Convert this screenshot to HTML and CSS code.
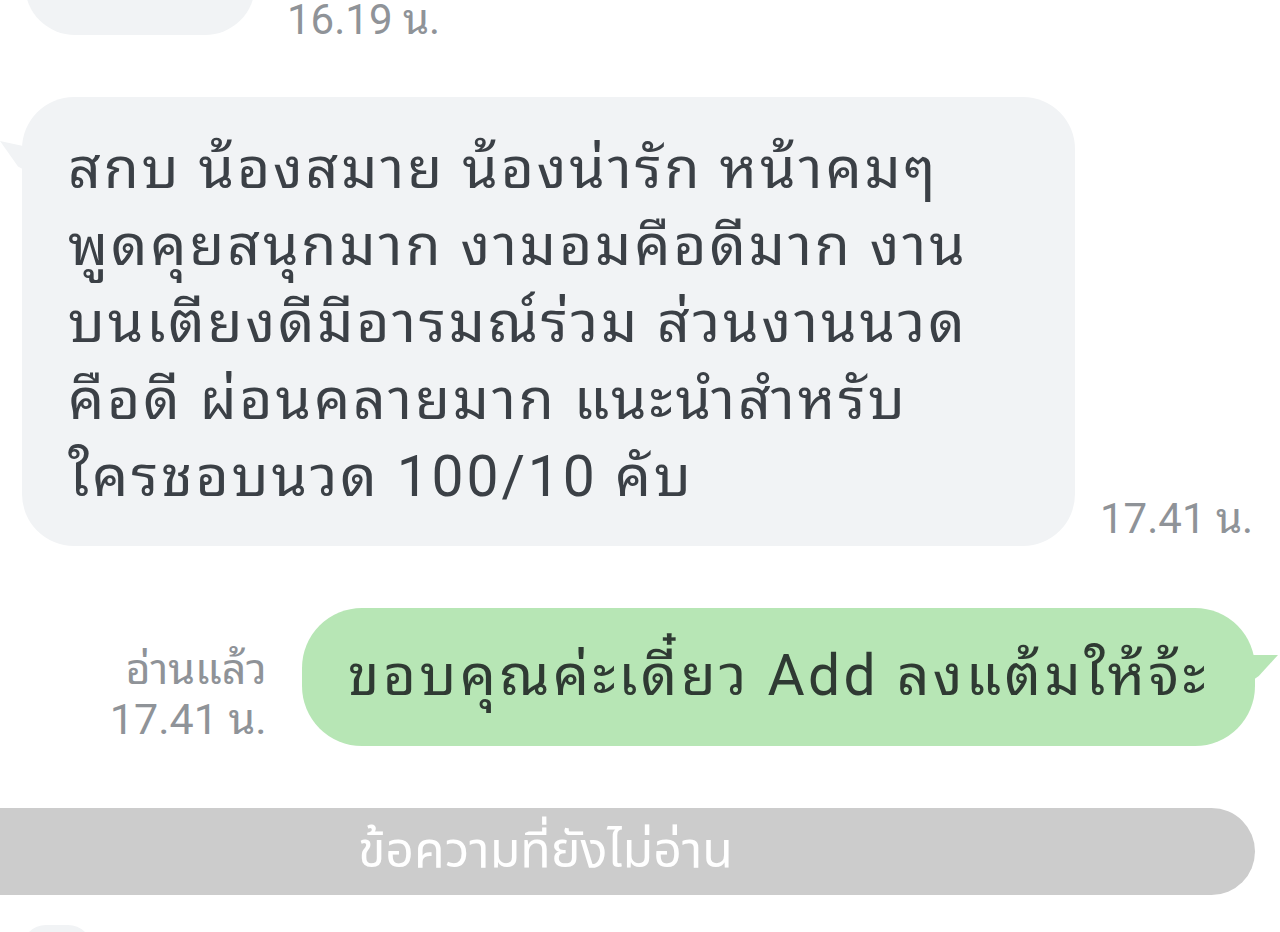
FILE: index.html
```html
<!doctype html>
<html lang="th">

<head>
  <meta charset="utf-8">
  <meta name="viewport" content="width=device-width, initial-scale=1">
  <link rel="stylesheet" href="styles.css">
  <title>แชท</title>
</head>

<body>
  <div class="chat">
    <div class="row row-in row-prev">
      <div class="bubble bubble-in bubble-prev"></div>
      <div class="meta meta-prev">16.19 น.</div>
    </div>

    <div class="row row-in">
      <div class="bubble bubble-in tail-in">
        สกบ น้องสมาย น้องน่ารัก หน้าคมๆ<br>
        พูดคุยสนุกมาก งามอมคือดีมาก งาน<br>
        บนเตียงดีมีอารมณ์ร่วม ส่วนงานนวด<br>
        คือดี ผ่อนคลายมาก แนะนำสำหรับ<br>
        ใครชอบนวด 100/10 คับ
      </div>
      <div class="meta">17.41 น.</div>
    </div>

    <div class="row row-out">
      <div class="meta meta-out">
        <div>อ่านแล้ว</div>
        <div>17.41 น.</div>
      </div>
      <div class="bubble bubble-out tail-out">ขอบคุณค่ะเดี๋ยว Add ลงแต้มให้จ้ะ</div>
    </div>

    <div class="unread">
      <span>ข้อความที่ยังไม่อ่าน</span>
    </div>

    <div class="row row-in">
      <div class="bubble bubble-in bubble-next"></div>
    </div>
  </div>
</body>

</html>
```

FILE: styles.css
```css
body {
  font-family: Roboto, "Noto Sans Thai Looped", "Noto Sans Thai", Waree, Loma, Garuda, "Noto Sans", sans-serif;
  margin: 0;
  background-color: #fff;
  color: #3b4046;
  overflow: hidden;
  height: 932px;
}

.chat {
  display: flex;
  flex-direction: column;
}

.row {
  display: flex;
  align-items: flex-end;
}

.row-in {
  padding-left: 22px;
}

.row-out {
  justify-content: flex-end;
  padding-right: 25px;
  margin-top: 62px;
}

.row-prev {
  margin-top: -65px;
  padding-left: 25px;
}

.bubble {
  position: relative;
  font-size: 57px;
  letter-spacing: 2.9px;
  line-height: 77px;
}

.bubble-in {
  background-color: #f1f3f5;
  border-radius: 52px;
  width: 1053px;
  box-sizing: border-box;
  padding: 33px 20px 31px 46px;
}

.bubble-prev {
  width: 230px;
  height: 100px;
  padding: 0;
  border-radius: 50px;
}

.bubble-next {
  width: 70px;
  height: 60px;
  padding: 0;
  border-radius: 24px;
}

.row-prev + .row {
  margin-top: 62px;
}

.tail-in::before {
  content: "";
  position: absolute;
  left: -22px;
  top: 44px;
  width: 30px;
  height: 32px;
  background-color: #f1f3f5;
  clip-path: polygon(0 0, 100% 20%, 100% 100%, 60% 80%);
}

.bubble-out {
  background-color: #b7e6b5;
  color: #2f3a33;
  border-radius: 60px;
  padding: 28px 46px 30px 46px;
  line-height: 80px;
  letter-spacing: 3.4px;
}

.tail-out::after {
  content: "";
  position: absolute;
  right: -23px;
  top: 47px;
  width: 32px;
  height: 30px;
  background-color: #b7e6b5;
  clip-path: polygon(100% 0, 0 0, 0 100%, 40% 70%);
}

.meta {
  color: #8f9398;
  font-size: 42px;
  line-height: 46px;
  margin-left: 25px;
  margin-bottom: 4px;
  white-space: nowrap;
}

.meta-prev {
  margin-left: 32px;
  margin-bottom: -8px;
}

.meta-out {
  text-align: right;
  font-size: 43px;
  margin-left: 0;
  margin-right: 35px;
  margin-bottom: 2px;
  line-height: 50px;
}

.unread {
  margin-top: 62px;
  margin-right: 25px;
  height: 87px;
  background-color: #cccccc;
  border-radius: 0 45px 45px 0;
  display: flex;
  align-items: center;
  padding-left: 358px;
  margin-bottom: 30px;
}

.unread span {
  color: #fff;
  font-family: "Noto Sans Thai", sans-serif;
  font-size: 50px;
}
```
